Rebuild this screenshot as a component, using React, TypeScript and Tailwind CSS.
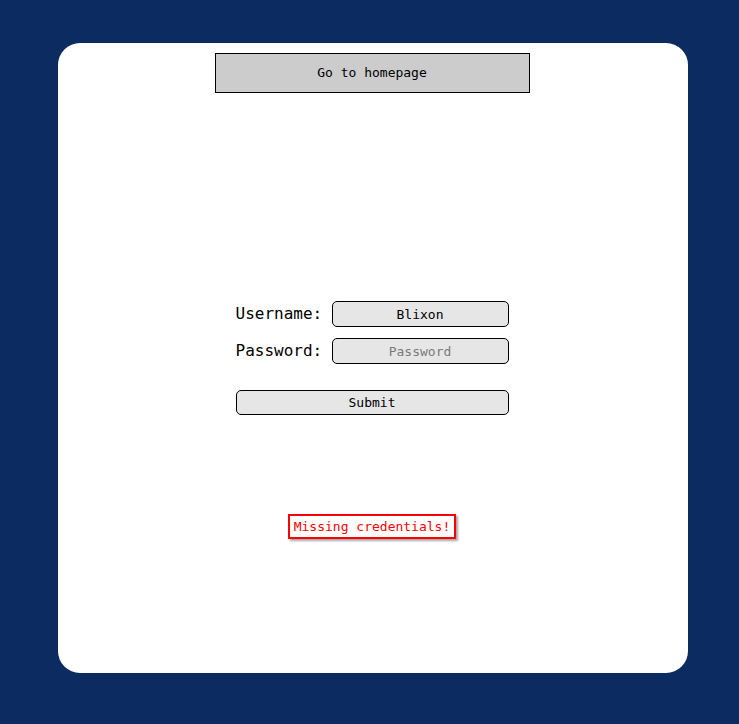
import type { FC } from "react";

const mono = "font-['DejaVu_Sans_Mono','Liberation_Mono',monospace]";

const LoginForm: FC = () => {
  return (
    <form className="flex w-[273px] flex-col" onSubmit={(e) => e.preventDefault()}>
      <div className="flex items-center justify-between">
        <label className="text-[16px] text-black">Username:</label>
        <input
          defaultValue="Blixon"
          className="h-[26px] w-[177px] rounded-[5px] border border-black bg-[#e6e6e6] text-center text-[13px] text-black outline-none"
        />
      </div>
      <div className="mt-[11px] flex items-center justify-between">
        <label className="text-[16px] text-black">Password:</label>
        <input
          type="password"
          placeholder="Password"
          className="h-[26px] w-[177px] rounded-[5px] border border-black bg-[#e6e6e6] text-center text-[13px] text-black outline-none placeholder:text-[#7a7a7a]"
        />
      </div>
      <button
        type="submit"
        className="mt-[26px] h-[25px] w-full rounded-[5px] border border-black bg-[#e6e6e6] text-[13px] text-black"
      >
        Submit
      </button>
    </form>
  );
};

export default function App() {
  return (
    <div className={`min-h-[724px] bg-[#0c2b61] pt-[43px] ${mono}`}>
      <div className="ml-[58px] flex h-[630px] w-[630px] flex-col items-center rounded-[22px] bg-white pr-[2px]">
        <button className="mt-[10px] h-[40px] w-[315px] border border-black bg-[#cccccc] text-[13px] text-black">
          Go to homepage
        </button>
        <div className="mt-[208px]">
          <LoginForm />
        </div>
        <div className="mt-[99px] border-2 border-[#ff0000] px-[4px] py-[2px] text-[13px] leading-[17px] text-[#ff0000] shadow-[2px_2px_2px_rgba(0,0,0,0.35)]">
          Missing credentials!
        </div>
      </div>
    </div>
  );
}
